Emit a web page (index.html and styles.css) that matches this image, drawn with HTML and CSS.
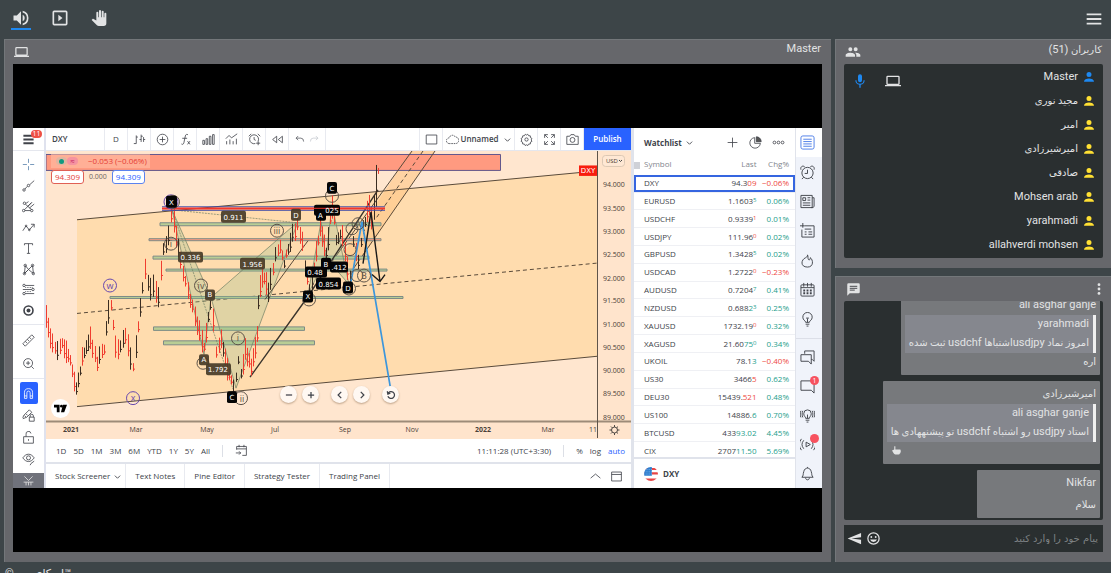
FILE: index.html
```html
<!DOCTYPE html>
<html lang="fa">
<head>
<meta charset="utf-8">
<title>Master</title>
<link rel="stylesheet" href="styles.css">
</head>
<body>
<header class="topbar">
  <div class="topbar-group">
    <button class="top-btn active" aria-label="Sound"><svg viewBox="0 0 24 24"><path class="solid" d="M3 9v6h4l5 5V4L7 9H3zm13.500 3A4.500 4.500 0 0 0 14 7.970v8.050A4.500 4.500 0 0 0 16.500 12zM14 3.230v2.060a7 7 0 0 1 0 13.420v2.060a9 9 0 0 0 0-17.540z"/></svg></button>
    <button class="top-btn" aria-label="Play"><svg viewBox="0 0 24 24"><path class="solid" d="M10 8v8l5-4zM19 3H5a2 2 0 0 0-2 2v14a2 2 0 0 0 2 2h14a2 2 0 0 0 2-2V5a2 2 0 0 0-2-2zm0 16H5V5h14z"/></svg></button>
    <button class="top-btn" aria-label="Raise hand"><svg viewBox="0 0 24 24"><path class="solid" d="M23 5.500V20a4 4 0 0 1-4 4h-7.300a4 4 0 0 1-2.830-1.180L1 14.830s1.260-1.230 1.300-1.250c.5-.4 1.100-.35 1.500-.1L8 15.900V4a1.500 1.500 0 0 1 3 0v7h1V1.500a1.500 1.500 0 0 1 3 0V11h1V2.500a1.500 1.500 0 0 1 3 0V11h1V5.500a1.500 1.500 0 0 1 3 0z"/></svg></button>
  </div>
  <button class="menu-btn" aria-label="Menu"><svg viewBox="0 0 24 24"><path class="solid" d="M4 6h16v2H4zm0 5h16v2H4zm0 5h16v2H4z"/></svg></button>
</header>

<main class="layout">
  <section class="panel stage">
    <div class="panel-head">
      <svg class="ico16" viewBox="0 0 24 24"><path class="solid" d="M20 18a2 2 0 0 0 2-2V6a2 2 0 0 0-2-2H4a2 2 0 0 0-2 2v10a2 2 0 0 0 2 2H0v2h24v-2zM4 6h16v10H4z"/></svg>
      <span>Master</span>
    </div>
    <div class="screen">
      <div class="share">
        <div class="tools">
          <button class="tools-menu" aria-label="Chart menu"><svg viewBox="0 0 14 14"><path class="thick" d="M1.500 3h11M1.500 7h11M1.500 11h11"/></svg><span class="count">11</span></button>
          <div class="tool-group tg-a">
            <button aria-label="Cross"><svg class="blue" viewBox="0 0 16 16"><path d="M8 1v5M8 10v5M1 8h5M10 8h5"/></svg></button>
            <button aria-label="Trend line"><svg viewBox="0 0 16 16"><path d="M3.500 12.500 6.500 9M9.500 7 15 2"/><circle cx="2.500" cy="13.500" r="1.500"/><circle cx="8" cy="8" r="1.500"/></svg></button>
            <button aria-label="Pitchfork"><svg viewBox="0 0 16 16"><path d="M3.500 13h7M3 12 12 3M4 5l8 7M7 8l5-5M9 10l6-5M5 4l3-2"/><circle cx="3" cy="4" r="1.500"/><circle cx="2" cy="13" r="1.500"/><circle cx="12" cy="13" r="1.500"/></svg></button>
            <button aria-label="Elliott wave"><svg viewBox="0 0 16 16"><path d="M1 12 5 6l4 5 6-7M11 4h4v4"/><circle cx="5" cy="6" r="1"/><circle cx="9" cy="11" r="1"/></svg></button>
            <button aria-label="Text"><svg viewBox="0 0 16 16"><path d="M3 4V2h10v2M8 2v12M6 14h4"/></svg></button>
            <button aria-label="Patterns"><svg viewBox="0 0 16 16"><path d="M3 13 4 3l4 5 5-5 1 10-6-5zM3 13l5-5"/><circle cx="4" cy="3" r="1.500"/><circle cx="13" cy="3" r="1.500"/><circle cx="3" cy="13" r="1.500"/><circle cx="14" cy="13" r="1.500"/></svg></button>
            <button aria-label="Projection"><svg viewBox="0 0 16 16"><path d="M4 3h11M1 8h11M4 13h11" /><circle cx="2.500" cy="3" r="1.500"/><circle cx="13.500" cy="8" r="1.500"/><circle cx="2.500" cy="13" r="1.500"/><path stroke-dasharray="1 1" d="M4 5.500h10M4 10.500h8"/></svg></button>
            <button aria-label="Dot"><svg viewBox="0 0 16 16"><circle class="thick" cx="8" cy="8" r="5.500"/><circle class="solid" cx="8" cy="8" r="2.400"/></svg></button>
          </div>
          <div class="tool-group tg-b">
            <button aria-label="Measure"><svg viewBox="0 0 16 16"><path d="m1 12 11-11 3 3L4 15zM4 9l2 2M6.500 6.500l2 2M9 4l2 2"/></svg></button>
            <button aria-label="Zoom in"><svg viewBox="0 0 16 16"><circle cx="7.500" cy="7.500" r="5.500"/><path d="m11.500 11.500 3 3M5 7.500h5M7.500 5v5"/></svg></button>
          </div>
          <div class="tool-group tg-c">
            <button class="magnet" aria-label="Magnet"><svg viewBox="0 0 16 16"><path d="M3 14V7a5 5 0 0 1 10 0v7h-3V7a2 2 0 0 0-4 0v7zM3 11h3M10 11h3"/></svg></button>
            <button aria-label="Stay in drawing mode"><svg viewBox="0 0 16 16"><path d="m1 11 1-3 7-7 3 3-6 6-5 2M3 8l2 2M5 6l2 2"/><path d="M9 10h6v5H9zM10 10V8.500a2 2 0 0 1 4 0V10"/></svg></button>
            <button aria-label="Lock"><svg viewBox="0 0 16 16"><path d="M2 7h12v8H2zM5 7V4a3 3 0 0 1 6-1M8 10v2"/></svg></button>
            <button aria-label="Hide drawings"><svg viewBox="0 0 16 16"><path d="M1 6c4-6 10-6 14 0-4 6-10 6-14 0z"/><circle cx="8" cy="6" r="2.500"/><path d="m10 15 1-2 4-3"/></svg></button>
          </div>
          <div class="tools-more"><svg viewBox="0 0 16 12"><path d="m3 1 5 5 5-5M2 8h12M5 8v4M11 8v4M8 8v4"/></svg></div>
        </div>

        <div class="center">
          <div class="chart-bar">
            <span class="symbol">DXY</span>
            <button class="cell">D</button>
            <button class="cell" aria-label="Bars"><svg viewBox="0 0 16 16"><path d="M4 3v10M1 13h3M4 5h2M10 2v9M8 8h2M10 4h2M13 5v6M13 8h2"/></svg></button>
            <button class="cell" aria-label="Compare"><svg viewBox="0 0 16 16"><circle cx="8" cy="8" r="6.500"/><path d="M4.500 8h7M8 4.500v7"/></svg></button>
            <button class="cell" aria-label="Indicators"><svg viewBox="0 0 16 16"><path d="M11 2C8 1 8 3 7.500 5L6 12c-.4 2-2 2.500-3 1.500M4 6.500h6M10.500 10l3 4M13.500 10l-3 4"/></svg></button>
            <button class="cell" aria-label="Financials"><svg viewBox="0 0 16 16"><path d="M1 9h2v5H1zM5 7h2v7H5zM9 4h2v10H9zM13 2h2v12h-2z"/></svg></button>
            <button class="cell" aria-label="Templates"><svg viewBox="0 0 16 16"><path d="m1 7 4-4 3 3 7-5M2 10v4M6 8v6M10 10v4M14 7v7"/></svg></button>
            <button class="cell" aria-label="Alert"><svg viewBox="0 0 16 16"><path d="M12.500 10A5.500 5.500 0 1 0 9 13M1 4l3-3M12 1l3 3M7.500 5v3l2 1M12.500 10v5M10 12.500h5"/></svg></button>
            <button class="cell" aria-label="Replay"><svg viewBox="0 0 16 16"><path d="M7 4v8L2 8zM14 4v8L9 8z"/></svg></button>
            <div class="cell undo"><button aria-label="Undo"><svg viewBox="0 0 16 16"><path d="M6 3 3 6l3 3M3 6h7q4 0 4 5"/></svg></button><button class="faint" aria-label="Redo"><svg viewBox="0 0 16 16"><path d="m10 3 3 3-3 3M13 6H6q-4 0-4 5"/></svg></button></div>
            <span class="filler"></span>
            <button class="cell" aria-label="Layout"><svg viewBox="0 0 16 16"><path d="M1.500 2.500h13v11h-13z"/></svg></button>
            <button class="cell named"><svg viewBox="0 0 16 16"><path stroke-dasharray="2 1" d="M4 13a3.500 3.500 0 0 1 0-7 4 4 0 0 1 7.500-1A4 4 0 0 1 12 13z"/></svg>Unnamed<svg class="chev" viewBox="0 0 8 8"><path d="m1 3 3 3 3-3"/></svg></button>
            <button class="cell" aria-label="Settings"><svg viewBox="0 0 16 16"><path d="m6.500 1.500 1.500 1 1.500-1 1 1.800 2.200.2.200 2.200 1.800 1-.9 1.800.9 1.800-1.800 1-.2 2.200-2.200.200-1 1.800-1.500-1-1.500 1-1-1.800-2.200-.2-.2-2.200-1.800-1 .9-1.800-.9-1.800 1.800-1 .2-2.200 2.200-.2z"/><circle cx="8" cy="8" r="2"/></svg></button>
            <button class="cell" aria-label="Fullscreen"><svg viewBox="0 0 16 16"><path d="M2 6V2h4M2 2l4 4M10 2h4v4M14 2l-4 4M2 10v4h4M2 14l4-4M14 10v4h-4M14 14l-4-4"/></svg></button>
            <button class="cell" aria-label="Snapshot"><svg viewBox="0 0 16 16"><path d="M1 4h3.500L6 2h4l1.500 2H15v10H1z"/><circle cx="8" cy="8.500" r="3"/></svg></button>
            <button class="publish">Publish</button>
          </div>

          <div class="chart">
            <svg class="plot" viewBox="46 151 585 289" preserveAspectRatio="none">
              <path fill="#ffdcae" d="M77 220 597 171V357L77 407z"/>
              <path fill="#ffc786" opacity=".6" d="M411 151h24L352 272l-10-16z"/>
              <path fill="#ff9a80" stroke="#62578c" d="M46 154.500h454.500v16H46z"/>
              <g class="guide">
                <path d="M77 220 597 171M77 407.500 597 357"/>
                <path stroke-dasharray="4 3" d="M77 314 597 263.500"/>
                <path d="M412 151 332 262M435 151 350 274"/>
                <path stroke-dasharray="4 3" d="M423 151 375 220"/>
              </g>
              <g class="zone">
                <path class="up" d="M160 223h221v3H160zM153 256.500h216v3H153zM166 269.500h221v2H166zM110 297h293v2H110zM153.500 327.500h151v3.500h-151zM163.500 341.500h151v4h-151z"/>
                <path class="down" d="M149 239h232v2H149z"/>
              </g>
              <g fill="#8fc08b" fill-opacity=".28" stroke="#6f7f64" stroke-width=".7">
                <path d="m172 210 32 145 7-57zM211 298l25 91 62-167zM308 295l13-73 5 36zM326 258l6-53 17 80z"/>
                <path fill="none" stroke-dasharray="2 1" d="m172 210 125 13M172 210l61 180"/>
              </g>
              <path fill="none" stroke="#3a342c" stroke-width="1.400" d="M250 378 308 297 378 190"/>
              <path class="guide" d="m265 300 43-59"/>
              <g id="candles"></g>
              <path fill="none" stroke="#3c4aa8" d="M162 207h223M162 210.500h223"/>
              <path fill="none" stroke="#f4372d" stroke-width="2" d="M162 208.700h223"/>
              <path fill="none" stroke="#3c96dc" stroke-width="1.700" d="m351 282 11-60 29 170"/>
              <path fill="none" stroke="#191919" stroke-width="1.400" d="m363 264 8-52 9 70M372 275l8 7 5-7"/>
              <g class="wave">
                <g class="violet"><circle cx="110" cy="286" r="6.500"/><circle cx="133" cy="399" r="6.500"/><circle cx="171" cy="202" r="7"/></g>
                <circle cx="173" cy="202" r="6.500"/><circle cx="171" cy="244" r="6.500"/><circle cx="201" cy="286" r="6.500"/><circle cx="277" cy="231" r="6.500"/><circle cx="238" cy="339" r="6.500"/><circle cx="241" cy="399" r="6.500"/><circle cx="332" cy="196" r="6.500"/><circle cx="203" cy="364" r="6"/><circle cx="309" cy="300" r="6.500"/><circle cx="349" cy="289" r="6.500"/><circle cx="352" cy="229" r="6"/><circle cx="358" cy="224" r="6"/><circle cx="350" cy="250" r="6"/><circle cx="357" cy="276" r="6"/><circle cx="364" cy="276" r="6.500"/>
                <g class="wave-text"><text class="vt" x="110" y="289">w</text><text class="vt" x="133" y="402">x</text><text x="171" y="247">i</text><text x="201" y="289">iv</text><text x="277" y="234">iii</text><text x="238" y="342">i</text><text x="242" y="403">ii</text><text x="358" y="227">A</text><text x="364" y="279">B</text></g>
              </g>
              <g fill="#493c29" fill-opacity=".93">
                <rect x="221" y="211" width="25" height="12" rx="2"/><rect x="178" y="252" width="25" height="11" rx="2"/><rect x="240" y="258" width="25" height="12" rx="2"/><rect x="206" y="364" width="25" height="12" rx="2"/><rect x="291" y="209" width="10" height="12" rx="2"/><rect x="205" y="290" width="10" height="11" rx="2"/><rect x="199" y="355" width="10" height="11" rx="2"/>
              </g>
              <g fill="#050505">
                <rect x="166" y="196" width="11" height="12" rx="2"/><rect x="314" y="205" width="26" height="11" rx="2"/><rect x="316" y="210" width="10" height="11" rx="2"/><rect x="327" y="182" width="10" height="12" rx="2"/><rect x="330" y="262" width="18" height="11" rx="2"/><rect x="305" y="267" width="22" height="11" rx="2"/><rect x="321" y="258" width="10" height="12" rx="2"/><rect x="316" y="278" width="25" height="12" rx="2"/><rect x="343" y="282" width="10" height="12" rx="2"/><rect x="303" y="291" width="10" height="12" rx="2"/><rect x="227" y="392" width="10" height="12" rx="2"/>
              </g>
              <path stroke="#ee3427" d="M314 208.500h25"/>
              <g class="tag">
                <text x="233.500" y="220">0.911</text><text x="190.500" y="260">0.336</text><text x="252.500" y="267">1.956</text><text x="218" y="373">1.792</text><text x="296" y="218">D</text><text x="210" y="298">B</text><text x="204" y="363">A</text><text x="171.500" y="205">X</text><text x="332" y="213">025</text><text x="320.500" y="218">A</text><text x="332" y="191">C</text><text x="339" y="270">.412</text><text x="315" y="275">0.48</text><text x="326" y="267">B</text><text x="328.500" y="287">0.854</text><text x="348" y="291">D</text><text x="308" y="300">X</text><text x="232" y="401">C</text>
              </g>
              <path fill="#ffe4cc" d="M598 151h33v289h-33zM46 423h585v17H46z"/>
              <path fill="none" stroke="#9d8b78" stroke-width="2" d="M46 422.500h585"/>
              <path fill="none" stroke="#5d5349" d="M597.500 151v288"/>
              <g class="axis">
                <text x="603" y="187">94.000</text><text x="603" y="211">93.500</text><text x="603" y="234">93.000</text><text x="603" y="257">92.500</text><text x="603" y="281">92.000</text><text x="603" y="304">91.500</text><text x="603" y="328">91.000</text><text x="603" y="351">90.500</text><text x="603" y="374">90.000</text><text x="603" y="397">89.500</text><text x="603" y="421">89.000</text>
                <g text-anchor="middle"><text class="year" x="71" y="433">2021</text><text x="136" y="433">Mar</text><text x="207" y="433">May</text><text x="275" y="433">Jul</text><text x="345" y="433">Sep</text><text x="412" y="433">Nov</text><text class="year" x="483" y="433">2022</text><text x="548" y="433">Mar</text><text x="593" y="433">11</text></g>
              </g>
              <rect x="602.500" y="155.500" width="22" height="11" rx="3" fill="#ffe8d4" stroke="#dcc8b4"/>
              <text class="small" x="606" y="163.500">USD</text><path fill="none" stroke="#444" d="m619 160 1.500 1.500 1.500-1.500"/>
              <path fill="#f81d0e" d="M579 165.500h18v10.500h-18z"/><text class="tag" x="588" y="173.500">DXY</text>
              <g fill="none" stroke="#4a4540"><circle cx="614.500" cy="431" r="3"/><path d="M614.500 426v2M614.500 434v2M609.500 431h2M617.500 431h2M611 427.500l1.300 1.300M616.700 433.200l1.300 1.300M611 434.500l1.300-1.300M616.700 428.800l1.300-1.300"/></g>
            </svg>
            <div class="legend">
              <div class="legend-row"><span class="pills"><i class="pill-a"></i><i class="pill-b">≈</i></span>−0.053 (−0.06%)</div>
              <div class="quotes"><button class="sell">94.309</button><span>0.000</span><button class="buy">94.309</button></div>
            </div>
            <div class="tv-mark"><svg viewBox="0 0 14 10"><path class="solid" d="M0 1h6v8H3V4H0zM9.500 1H14l-3 8H7.500z"/><circle class="solid" cx="8" cy="2.500" r="1.500"/></svg></div>
            <div class="chart-nav">
              <button aria-label="Zoom out"><svg viewBox="0 0 16 16"><path class="thick" d="M3 8h10"/></svg></button>
              <button aria-label="Zoom in chart"><svg viewBox="0 0 16 16"><path class="thick" d="M3 8h10M8 3v10"/></svg></button>
              <button class="apart" aria-label="Scroll left"><svg viewBox="0 0 16 16"><path class="thick" d="m10 3-5 5 5 5"/></svg></button>
              <button aria-label="Scroll right"><svg viewBox="0 0 16 16"><path class="thick" d="m6 3 5 5-5 5"/></svg></button>
              <button class="apart" aria-label="Reset chart"><svg viewBox="0 0 16 16"><path class="thick" d="M3 6a5.500 5.500 0 1 1 0 4M2 2l1 4.500L7 5"/></svg></button>
            </div>
          </div>

          <div class="range-bar">
            <button>1D</button><button>5D</button><button>1M</button><button>3M</button><button>6M</button><button>YTD</button><button>1Y</button><button>5Y</button><button>All</button>
            <span class="rule"></span>
            <button aria-label="Go to date"><svg viewBox="0 0 16 16"><path d="M2 7V3h12v11H9M2 6h12M5 1v3M11 1v3M1 11h6M5 9l2 2-2 2"/></svg></button>
            <span class="clock">11:11:28 (UTC+3:30)</span>
            <span class="rule"></span>
            <button>%</button><button>log</button><button class="auto">auto</button>
          </div>
          <div class="tab-bar">
            <button class="with-chev">Stock Screener<svg class="chev" viewBox="0 0 8 8"><path d="m1 3 3 3 3-3"/></svg></button><button>Text Notes</button><button>Pine Editor</button><button>Strategy Tester</button><button>Trading Panel</button>
            <span class="tab-end"><svg viewBox="0 0 16 16"><path d="m2 10 6-5 6 5"/></svg><svg viewBox="0 0 16 16"><path d="M2 2.500h12v11H2zM2 5.500h12"/></svg></span>
          </div>
        </div>

        <div class="watch">
          <div class="watch-head">
            <button class="watch-name">Watchlist<svg class="chev" viewBox="0 0 8 8"><path d="m1 3 3 3 3-3"/></svg></button>
            <button aria-label="Add symbol"><svg viewBox="0 0 16 16"><path d="M8 2v12M2 8h12"/></svg></button>
            <button aria-label="Advanced view"><svg viewBox="0 0 16 16"><path d="M7 2a6.500 6.500 0 1 0 7 7H7z"/><path fill="#555" d="M9 1v6h6a6 6 0 0 0-6-6z"/></svg></button>
            <button aria-label="More"><svg viewBox="0 0 16 16"><circle cx="3" cy="8" r="1.700"/><circle cx="8" cy="8" r="1.700"/><circle cx="13" cy="8" r="1.700"/></svg></button>
          </div>
          <div class="watch-body">
            <table>
              <thead><tr><th>Symbol</th><th>Last</th><th>Chg%</th></tr></thead>
              <tbody>
                <tr class="picked"><td>DXY</td><td>94.3<b class="dn">09</b></td><td class="dn">−0.06%</td></tr>
                <tr><td>EURUSD</td><td>1.1603<sup class="up">5</sup></td><td class="up">0.06%</td></tr>
                <tr><td>USDCHF</td><td>0.9339<sup class="dn">1</sup></td><td class="up">0.01%</td></tr>
                <tr><td>USDJPY</td><td>111.96<sup class="dn">0</sup></td><td class="up">0.02%</td></tr>
                <tr><td>GBPUSD</td><td>1.3428<sup class="up">5</sup></td><td class="up">0.02%</td></tr>
                <tr><td>USDCAD</td><td>1.2722<sup class="dn">0</sup></td><td class="dn">−0.23%</td></tr>
                <tr><td>AUDUSD</td><td>0.7204<sup class="up">7</sup></td><td class="up">0.41%</td></tr>
                <tr><td>NZDUSD</td><td>0.688<b class="up">2</b><sup class="up">3</sup></td><td class="up">0.25%</td></tr>
                <tr><td>XAUUSD</td><td>1732.19<sup class="dn">0</sup></td><td class="up">0.32%</td></tr>
                <tr><td>XAGUSD</td><td>21.60<b class="up">75</b><sup class="up">0</sup></td><td class="up">0.34%</td></tr>
                <tr><td>UKOIL</td><td>78.1<b class="up">3</b></td><td class="dn">−0.40%</td></tr>
                <tr><td>US30</td><td>3466<b class="dn">5</b></td><td class="up">0.62%</td></tr>
                <tr><td>DEU30</td><td>15439.<b class="dn">521</b></td><td class="up">0.48%</td></tr>
                <tr><td>US100</td><td>14886.<b class="up">6</b></td><td class="up">0.70%</td></tr>
                <tr><td>BTCUSD</td><td>433<b class="up">93.02</b></td><td class="up">4.45%</td></tr>
                <tr><td>CIX</td><td>2707<b class="up">11.50</b></td><td class="up">5.69%</td></tr>
              </tbody>
            </table>
          </div>
          <div class="watch-foot">
            <svg class="flag" viewBox="0 0 16 16"><defs><clipPath id="round"><circle cx="8" cy="8" r="8"/></clipPath></defs><g clip-path="url(#round)"><path fill="#fff" d="M0 0h16v16H0z"/><path fill="#e84545" d="M0 1h16v2.500H0zM0 6h16v2.500H0zM0 13h16v3H0z"/><path fill="#2f7fd0" d="M0 0h9v10H0z"/><path stroke="#bcd9f5" stroke-width=".6" stroke-dasharray="1 1" d="M0 3h9M0 5.500h9M0 8h9"/></g></svg>
            <strong>DXY</strong>
          </div>
        </div>

        <div class="side-rail">
          <div class="rail-group rg-a">
            <button class="on" aria-label="Watchlist panel"><svg viewBox="0 0 16 16"><rect x="1" y="1" width="14" height="14" rx="2"/><path d="M3.500 4.500h9M3.500 7h9M3.500 9.500h9M3.500 12h9"/></svg></button>
            <button aria-label="Alerts"><svg viewBox="0 0 16 16"><circle cx="8" cy="8.500" r="6"/><path d="M8 5v4H5M1 5C0 2 3 0 5 2M15 5c1-3-2-5-4-3M4 13l-2 2M12 13l2 2"/></svg></button>
            <button aria-label="News"><svg viewBox="0 0 16 16"><path d="M1 1.500h12v13H1zM13 4h2v9l-1 1.500h-2M3 4h3v3H3zM8 4h3M8 6.500h3M3 9.500h8M3 12h8"/></svg></button>
            <button aria-label="Data window"><svg viewBox="0 0 16 16"><path d="M5 3h10v12H2V7M3 0v5M0 3h5M5 6.500h7M5 9.500h2M9 9.500h4M5 12h2M9 12h4"/></svg></button>
            <button aria-label="Hotlists"><svg viewBox="0 0 16 16"><path d="M8 2c1 2 0 3 1 5 1 1 2 0 2-2 3 2 4 10-3 10C0 15 1 7 6 5c2-1 2-2 2-3z"/></svg></button>
            <button aria-label="Calendar"><svg viewBox="0 0 16 16"><rect x="1" y="3" width="14" height="12" rx="1"/><path d="M1 6h14M4 1v4M8 1v4M12 1v4"/><path stroke-dasharray="2 1.500" class="thick" d="M3.500 9h9M3.500 12h9"/></svg></button>
            <button aria-label="My ideas"><svg viewBox="0 0 16 16"><path d="M6 11c0-2-3-2-3-5.500a5 5 0 0 1 10 0C13 9 10 9 10 11zM6 13h4M7 15h2M8 11V7M6.500 6.500h3"/></svg></button>
          </div>
          <div class="rail-group rg-b">
            <button aria-label="Public chats"><svg viewBox="0 0 16 16"><path d="M5 4V1h10v11l-2-2h-1M1 5h11v10l-3-3H1z"/></svg></button>
            <button aria-label="Private chats"><svg viewBox="0 0 16 16"><path d="M1 2h14v13l-3-3H1z"/></svg><span class="count side-count">1</span></button>
            <button aria-label="Ideas stream"><svg viewBox="0 0 16 16"><path d="M6 11c0-2-2-2-2-5a4 4 0 0 1 8 0c0 3-2 3-2 5zM6 13h4M7 15h2M8 11V7M3 3c-1 2-1 5 0 7M13 3c1 2 1 5 0 7M1 3c-1 2-1 5 0 7M15 3c1 2 1 5 0 7"/></svg></button>
            <button aria-label="Streams"><svg viewBox="0 0 16 16"><path d="M6.500 5.500v5L11 8zM4 3.500a7 7 0 0 0 0 9M12 3.500a7 7 0 0 1 0 9M1.500 2a10 10 0 0 0 0 12M14.500 2a10 10 0 0 1 0 12"/></svg><span class="count side-count"></span></button>
            <button aria-label="Notifications"><svg viewBox="0 0 16 16"><path d="M2 12c2-2 1-3 2-6 1-5 7-5 8 0 1 3 0 4 2 6zM6 12.500c0 3 4 3 4 0M8 1v1"/></svg></button>
          </div>
        </div>
      </div>
    </div>
  </section>

  <div class="side">
    <section class="panel users" dir="rtl">
      <div class="panel-head">
        <span class="fa">کاربران <bdi>(51)</bdi></span>
        <svg class="ico16" viewBox="0 0 24 24"><path class="solid" d="M16 11a3 3 0 1 0 0-6 3 3 0 0 0 0 6zm-8 0a3 3 0 1 0 0-6 3 3 0 0 0 0 6zm0 2c-2.330 0-7 1.170-7 3.500V19h14v-2.500C15 14.170 10.330 13 8 13zm8 0c-.29 0-.62.020-.97.050A4.200 4.200 0 0 1 17 16.500V19h6v-2.500c0-2.330-4.670-3.500-7-3.500z"/></svg>
      </div>
      <ul class="user-list">
        <li class="host"><svg class="person" viewBox="0 0 16 16"><path class="solid" d="M8 8a4 4 0 1 0 0-8 4 4 0 0 0 0 8zM0 15.500C0 8.500 16 8.500 16 15.500z"/></svg><span>Master</span>
          <span class="host-icons"><svg class="ico16" viewBox="0 0 24 24"><path class="solid" d="M20 18a2 2 0 0 0 2-2V6a2 2 0 0 0-2-2H4a2 2 0 0 0-2 2v10a2 2 0 0 0 2 2H0v2h24v-2zM4 6h16v10H4z"/></svg><svg class="ico16 mic" viewBox="0 0 24 24"><path class="solid" d="M12 14a3 3 0 0 0 3-3V5a3 3 0 0 0-6 0v6a3 3 0 0 0 3 3zm7-3h-1.700a5.300 5.300 0 0 1-10.600 0H5a7 7 0 0 0 6 6.700V22h2v-4.300a7 7 0 0 0 6-6.700z"/></svg></span></li>
        <li><svg class="person" viewBox="0 0 16 16"><path class="solid" d="M8 8a4 4 0 1 0 0-8 4 4 0 0 0 0 8zM0 15.500C0 8.500 16 8.500 16 15.500z"/></svg><span class="fa">مجید نوری</span></li>
        <li><svg class="person" viewBox="0 0 16 16"><path class="solid" d="M8 8a4 4 0 1 0 0-8 4 4 0 0 0 0 8zM0 15.500C0 8.500 16 8.500 16 15.500z"/></svg><span class="fa">امیر</span></li>
        <li><svg class="person" viewBox="0 0 16 16"><path class="solid" d="M8 8a4 4 0 1 0 0-8 4 4 0 0 0 0 8zM0 15.500C0 8.500 16 8.500 16 15.500z"/></svg><span class="fa">امیرشیرزادی</span></li>
        <li><svg class="person" viewBox="0 0 16 16"><path class="solid" d="M8 8a4 4 0 1 0 0-8 4 4 0 0 0 0 8zM0 15.500C0 8.500 16 8.500 16 15.500z"/></svg><span class="fa">صادقی</span></li>
        <li><svg class="person" viewBox="0 0 16 16"><path class="solid" d="M8 8a4 4 0 1 0 0-8 4 4 0 0 0 0 8zM0 15.500C0 8.500 16 8.500 16 15.500z"/></svg><span>Mohsen arab</span></li>
        <li><svg class="person" viewBox="0 0 16 16"><path class="solid" d="M8 8a4 4 0 1 0 0-8 4 4 0 0 0 0 8zM0 15.500C0 8.500 16 8.500 16 15.500z"/></svg><span>yarahmadi</span></li>
        <li><svg class="person" viewBox="0 0 16 16"><path class="solid" d="M8 8a4 4 0 1 0 0-8 4 4 0 0 0 0 8zM0 15.500C0 8.500 16 8.500 16 15.500z"/></svg><span>allahverdi mohsen</span></li>
      </ul>
    </section>

    <section class="panel chat" dir="rtl">
      <div class="panel-head">
        <button aria-label="Chat options"><svg class="kebab" viewBox="0 0 4 16"><circle class="solid" cx="2" cy="3" r="1.600"/><circle class="solid" cx="2" cy="8" r="1.600"/><circle class="solid" cx="2" cy="13" r="1.600"/></svg></button>
        <svg class="ico16" viewBox="0 0 24 24"><path class="solid" d="M20 2H4a2 2 0 0 0-2 2v18l4-4h14a2 2 0 0 0 2-2V4a2 2 0 0 0-2-2zM6 9h12v2H6zm8 5H6v-2h8zm4-6H6V6h12z"/></svg>
      </div>
      <div class="messages">
        <article class="bubble"><h3>ali asghar ganje</h3><blockquote><p>yarahmadi</p><p class="fa">امروز نماد <bdi>usdjpy</bdi>اشتباها <bdi>usdchf</bdi> ثبت شده</p></blockquote><p class="fa">اره</p></article>
        <article class="bubble"><h3 class="fa">امیرشیرزادی</h3><blockquote><p>ali asghar ganje</p><p class="fa">استاد <bdi>usdjpy</bdi> رو اشتباه <bdi>usdchf</bdi> تو پیشنههادی ها</p></blockquote><p class="react"><svg viewBox="0 0 16 16"><path class="solid" d="M0 8 4 6V1c0-1 2-1 2 0v5h8c2 0 2 2 1 2.500 1 .5 1 2 0 2.500.5 1 0 2-1 2 0 1.500-1 2-2 2H6c-3 0-4-4-6-7z"/></svg></p></article>
        <article class="bubble short"><h3>Nikfar</h3><p class="fa">سلام</p></article>
      </div>
      <form class="compose">
        <input type="text" aria-label="پیام" placeholder="پیام خود را وارد کنید">
        <button type="button" aria-label="Emoji"><svg viewBox="0 0 24 24"><path class="solid" d="M12 2a10 10 0 1 0 0 20 10 10 0 0 0 0-20zm0 18a8 8 0 1 1 0-16 8 8 0 0 1 0 16zM15.500 11a1.500 1.500 0 1 0 0-3 1.500 1.500 0 0 0 0 3zm-7 0a1.500 1.500 0 1 0 0-3 1.500 1.500 0 0 0 0 3zM6.500 13.500a5.800 5.800 0 0 0 11 0z"/></svg></button>
        <button type="button" aria-label="Send"><svg viewBox="0 0 24 24"><path class="solid" d="M22.500 3 1 12l21.500 9v-7L7 12l15.500-2z"/></svg></button>
      </form>
    </section>
  </div>
</main>
<footer class="footer">© اسکای‌روم™</footer>
<script src="chart.js"></script>
</body>
</html>
```

FILE: styles.css
```css
* { box-sizing: border-box; }
html, body { margin: 0; height: 100%; overflow: hidden; }
body { background: #3d4548; color: #e2e3e4; font: 11px/18px Roboto, "DejaVu Sans", sans-serif; }
button { display: flex; align-items: center; justify-content: center; padding: 0; border: 0; background: none; color: inherit; font: inherit; position: relative; }
h3, p, blockquote, ul { margin: 0; padding: 0; font-size: 11px; font-weight: 400; list-style: none; }
svg { display: block; flex: none; fill: none; stroke: currentColor; }
.solid { fill: currentColor; stroke: none; }
.thick { stroke-width: 2; }
.fa { font-size: 10px; }
.fa bdi { font-size: 11px; }

.topbar { height: 39px; display: flex; justify-content: space-between; align-items: flex-start; padding: 8px 6px 0 11px; }
.topbar-group { display: flex; gap: 19px; }
.top-btn { width: 20px; height: 22px; border-bottom: 2px solid transparent; }
.top-btn.active { border-color: #1e88f0; }
.top-btn svg { width: 20px; height: 20px; }
.top-btn:last-child svg { width: 16px; }
.menu-btn svg { width: 22px; height: 22px; }

.layout { height: calc(100vh - 50px); display: grid; grid-template-columns: 827fr 276fr; gap: 4px; padding: 0 0 0 4px; min-height: 0; }
.panel { display: flex; flex-direction: column; min-height: 0; background: #66676b; border: 1px solid #73777a; border-width: 1px 0 0 1px; padding: 0 9px 10px 8px; }
.panel-head { height: 24px; flex: none; display: flex; justify-content: space-between; align-items: center; padding: 0 1px; }
.panel-head span { margin-bottom: 6px; }
.ico16 { width: 16px; height: 16px; }
.stage .ico16 { width: 15px; }
.screen { flex: 1; min-height: 0; background: #000; display: flex; align-items: center; }
.share { width: 100%; aspect-ratio: 809 / 360; display: grid; grid-template-columns: 33px 1fr 164px 27px; background: #fff; color: #40434a; font: 8px/12px "Open Sans", sans-serif; direction: ltr; }
.share svg { width: 13px; height: 13px; }
.share .chev { width: 7px; height: 7px; margin-left: 4px; }

.tools { display: flex; flex-direction: column; border-right: 2px solid #dfe2ee; }
.tools-menu { height: 23px; border-bottom: 1px solid #e5e7ee; }
.count { position: absolute; left: 18px; top: 2px; min-width: 11px; height: 8px; border-radius: 5px; background: #ee5045; color: #fff; font-size: 7px; line-height: 8px; text-align: center; }
.tool-group { display: flex; flex-direction: column; padding: 3px 0; border-bottom: 1px solid #e5e7ee; }
.tool-group button { flex: 1; }
.tg-a { flex: 179; }
.tg-b { flex: 50; }
.tg-c { flex: 94; border: 0; }
.blue { color: #5b84ae; }
.tool-group .magnet { align-self: center; width: 18px; background: #2962ff; color: #fff; border-radius: 2px; }
.tools-more { height: 15px; background: #70727b; color: #fff; display: flex; justify-content: center; align-items: center; }
.tools-more path { stroke: #e4e4e4; }

.center { display: flex; flex-direction: column; min-width: 0; }
.chart-bar { height: 23px; flex: none; display: flex; border-bottom: 1px solid #e5e7ee; }
.symbol { width: 59px; padding: 5px 6px; font-weight: 600; border-right: 1px solid #e8eaf0; }
.cell { width: 23px; border-right: 1px solid #e8eaf0; display: flex; align-items: center; justify-content: center; }
.undo { width: 37px; gap: 4px; }
.undo svg { width: 11px; }
.faint { color: #bfc3ca; }
.filler { flex: 1; border-right: 1px solid #e8eaf0; }
.named { width: 72px; gap: 2px; font-weight: 600; }
.publish { width: 47px; background: #2962ff; color: #fff; font-size: 8px; font-weight: 600; }

.chart { flex: 1; min-height: 0; position: relative; background: #ffe6cf; }
.share .plot { position: absolute; width: 100%; height: 100%; stroke: none; }
.guide { fill: none; stroke: #594a3a; stroke-width: 1; }
.zone path { stroke: #7c8b87; stroke-width: 1; }
.zone .up { fill: #b9cd94; }
.zone .down { fill: #fb9b82; }
.wave { fill: none; stroke: #5c5248; }
.wave .violet { stroke: #6748ae; }
.wave-text { fill: #5c5248; stroke: none; font-size: 9px; text-anchor: middle; }
.wave-text text { stroke: none; }
.wave-text .vt { fill: #6748ae; }
.tag { fill: #fff; font: 7px "DejaVu Sans", sans-serif; text-anchor: middle; }
.axis { fill: #4b4137; font-size: 7px; }
.axis .year { font-weight: 700; }
.small { fill: #4b4137; font-size: 6px; }
.bars { fill: none; stroke-width: 1; }
.bars.red { stroke: #f03c2e; }
.bars.dark { stroke: #3a2c20; }

.legend { position: absolute; left: 5px; top: 3px; color: #e53c35; }
.legend-row { display: flex; align-items: center; gap: 10px; height: 14px; padding: 0 3px 0 5px; background: rgba(255, 190, 165, .6); }
.pills { display: flex; }
.pills i { width: 11px; height: 8px; border-radius: 4px; background: #e0b5a0; display: flex; align-items: center; justify-content: center; font-style: normal; }
.pill-a::before { content: ""; width: 5px; height: 5px; border-radius: 50%; background: #119a80; }
.pills .pill-b { background: #f593a0; color: #c2185b; }
.quotes { display: flex; gap: 5px; margin-top: 2px; color: #6d645c; font-size: 7px; align-items: center; }
.quotes button { width: 33px; height: 14px; border: 1px solid #e06055; border-radius: 3px; background: #fff; color: #e53c35; font-size: 8px; }
.quotes .buy { border-color: #5b83ef; color: #2962ff; }
.tv-mark { position: absolute; left: 5px; bottom: 21px; width: 19px; height: 19px; border-radius: 50%; background: #fff; color: #000; display: flex; align-items: center; justify-content: center; }
.chart-nav { position: absolute; bottom: 36px; left: 40%; display: flex; gap: 5px; }
.chart-nav button { width: 17px; height: 17px; border-radius: 50%; background: #fff8f2; box-shadow: 0 1px 2px rgba(90, 60, 30, .4); }
.chart-nav svg { width: 10px; height: 10px; }
.chart-nav .apart { margin-left: 7px; }

.range-bar { height: 23px; flex: none; display: flex; align-items: center; gap: 7px; padding: 0 6px 0 10px; }
.rule { width: 1px; height: 12px; background: #dcdfe6; margin: 0 5px; }
.clock { margin-left: auto; }
.auto { color: #2962ff; }
.tab-bar { height: 26px; flex: none; display: flex; border-top: 2px solid #e0e3eb; }
.tab-bar button { padding: 0 9px; border-right: 1px solid #e8eaf0; }
.tab-bar .with-chev { padding-right: 4px; }
.tab-end { margin-left: auto; display: flex; align-items: center; gap: 8px; padding-right: 8px; }

.watch { display: flex; flex-direction: column; min-height: 0; border-left: 3px solid #e0e3eb; }
.watch-head { height: 27px; flex: none; display: flex; align-items: center; gap: 10px; padding: 2px 10px 0 10px; }
.watch-name { margin-right: auto; font-weight: 700; }
.watch-body { flex: 1; min-height: 0; overflow: hidden; }
.watch table { width: 100%; height: 305px; border-collapse: collapse; table-layout: fixed; }
.watch th { height: 20px; padding: 0 0 2px; font-weight: 400; color: #83868e; text-align: right; }
.watch th:first-child { background: linear-gradient(#cfd1d7, #cfd1d7) 0 50% / 6px 7px no-repeat; }
.watch td { padding: 0; text-align: right; line-height: 10px; border-bottom: 1px solid #eff0f4; }
.watch th:first-child, .watch td:first-child { text-align: left; padding-left: 10px; width: 50%; }
.watch th:nth-child(2), .watch td:nth-child(2) { width: 42px; }
.watch th:last-child, .watch td:last-child { padding-right: 6px; }
.watch .picked { outline: 2px solid #3565e0; outline-offset: -2px; }
.watch b { font-weight: 400; }
.watch sup { font-size: 6px; line-height: 6px; vertical-align: 2px; }
.watch .up { color: #1e9e8c; }
.watch .dn { color: #ee4a42; }
.watch-foot { height: 31px; flex: none; display: flex; align-items: center; gap: 5px; padding-left: 10px; border-top: 2px solid #e0e3eb; }
.share .flag { width: 14px; height: 14px; stroke: none; }

.side-rail { display: flex; flex-direction: column; background: #f0f3fa; border-left: 1px solid #e0e3eb; }
.side-rail svg { width: 15px; height: 15px; }
.rail-group { display: flex; flex-direction: column; }
.rail-group button { flex: 1; padding-right: 3px; }
.rg-a { flex: 211; padding-bottom: 4px; border-bottom: 1px solid #dcdfe8; }
.rg-b { flex: 149; padding-top: 4px; }
.rail-group .on { background: #fff; color: #4c7de8; }
.side-count { left: 14px; top: 4px; width: 9px; min-width: 0; height: 9px; background: #f7525f; line-height: 9px; }

.side { display: grid; grid-template-rows: 229fr 286fr; gap: 8px; min-height: 0; }
.side .panel { padding: 0 8px 10px; }
.users .panel-head span { margin-bottom: 4px; }
.user-list { flex: 1; background: #2a2f30; border-radius: 2px; padding: 1px 9px 0 8px; overflow: hidden; }
.user-list li { height: 24px; display: flex; align-items: center; gap: 5px; }
.person { width: 10px; height: 10px; color: #ffe033; }
.host .person, .mic { color: #1e88f0; }
.user-list li > span { margin-right: 1px; }
.user-list .host-icons { display: flex; gap: 17px; margin-right: auto; padding-top: 8px; }
.chat .panel-head { padding: 0 2px; }
.kebab { width: 4px; height: 14px; }
.chat .ico16 { width: 15px; height: 15px; }
.messages { flex: 1; min-height: 0; overflow: hidden; display: flex; flex-direction: column; justify-content: flex-end; align-items: flex-start; gap: 6px; padding: 0 3px 2px; background: #2a2f30; border-radius: 2px; }
.bubble { flex: none; padding: 4px; background: #77797c; border-radius: 1px; }
.bubble h3, .bubble blockquote p { height: 19px; line-height: 17px; }
.bubble blockquote { background: #85878e; border-right: 3px solid #f0f0f0; padding: 0 4px; }
.bubble > p { height: 18px; line-height: 18px; }
.bubble .fa { font-size: 10px; }
.react { display: flex; justify-content: flex-end; padding: 4px 5px; }
.react svg { width: 9px; height: 9px; }
.short { min-width: 123px; }
.short p { margin-top: 3px; }
.compose { height: 27px; flex: none; margin-top: 5px; display: flex; align-items: center; gap: 4px; background: #2a2f30; padding: 0 5px 0 3px; }
.compose input { flex: 1; min-width: 0; border: 0; padding: 0; background: none; color: #e2e3e4; font: 10px/18px "DejaVu Sans", sans-serif; }
.compose input::placeholder { color: #7e8284; opacity: 1; }
.compose svg { width: 15px; height: 15px; }

.footer { padding: 2px 5px; text-align: left; line-height: 20px; }
```

FILE: chart.js
```js
// Swing points of the price series: [x, y] in plot coordinates.
const swings = [[46,320],[50,340],[57,350],[62,342],[70,362],[76,392],[82,358],[90,340],[97,362],[104,348],[108,315],[111,305],[115,345],[120,350],[125,335],[130,360],[133,368],[138,325],[142,290],[145,272],[150,292],[153,285],[158,295],[163,250],[168,235],[171,214],[174,222],[178,250],[185,282],[190,300],[197,328],[204,345],[210,308],[213,320],[216,355],[221,340],[227,372],[233,388],[238,362],[241,375],[245,350],[251,368],[257,335],[258,300],[262,275],[268,292],[275,255],[280,245],[284,262],[290,240],[297,226],[302,240],[305,265],[309,292],[314,265],[320,226],[326,252],[332,205],[336,240],[342,236],[347,268],[350,278],[353,240],[358,262],[363,228],[369,208],[373,230]];

let seed = 7;
const rand = () => (seed = (seed * 16807) % 2147483647) / 2147483647;
const paths = { dark: "M376.500 165v42M374.500 195v25", red: "M378.500 168v6" };

for (let i = 1; i < swings.length; i++) {
  const [x0, y0] = swings[i - 1];
  const [x1, y1] = swings[i];
  const count = Math.max(1, Math.round((x1 - x0) / 2.2));
  for (let k = 0; k < count; k++) {
    const t = k / count;
    const x = Math.round(x0 + (x1 - x0) * t) + 0.5;
    const y = y0 + (y1 - y0) * t + (rand() - 0.5) * 6;
    const half = 4 + rand() * 8;
    const rising = rand() < (y1 < y0 ? 0.65 : 0.15);
    const key = rising ? "dark" : "red";
    const open = (y + half * 0.5).toFixed(1);
    paths[key] += `M${x} ${(y - half).toFixed(1)}V${(y + half).toFixed(1)}M${x} ${open}h1.500`;
  }
}

const layer = document.getElementById("candles");
for (const key of Object.keys(paths)) {
  const path = document.createElementNS("http://www.w3.org/2000/svg", "path");
  path.setAttribute("class", `bars ${key}`);
  path.setAttribute("d", paths[key]);
  layer.append(path);
}
```
